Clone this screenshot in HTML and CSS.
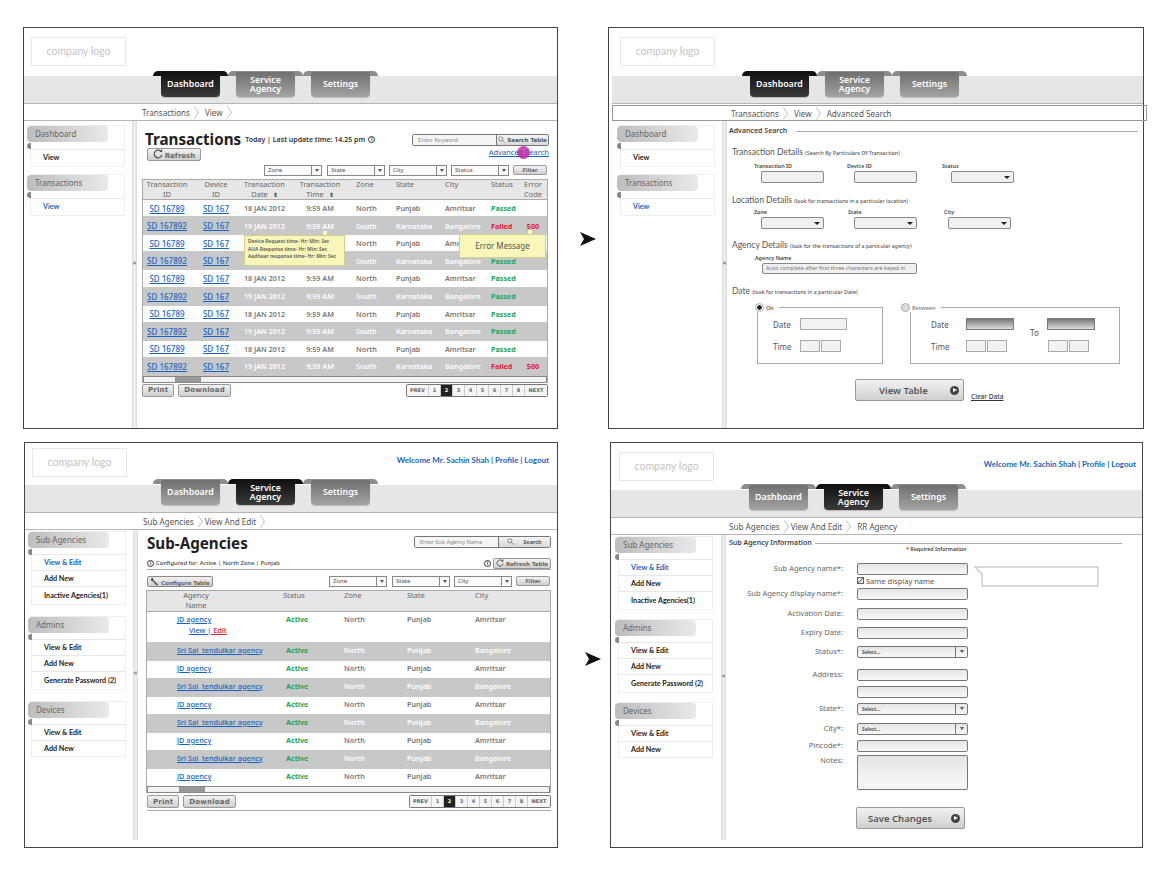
FILE: index.html
```html
<!DOCTYPE html>
<html lang="en">
<head>
    <meta charset="UTF-8">
    <title>Wireframes</title>
    <link rel="stylesheet" href="styles.css">
</head>
<body>
<div class="board">

    <!-- frame 1: transactions -->
    <section class="frame f1">
        <div class="top"><div class="logo">company logo</div></div>
        <nav class="tabs">
            <a class="tab on">Dashboard</a>
            <a class="tab">Service<br>Agency</a>
            <a class="tab">Settings</a>
        </nav>
        <div class="crumbs"><span>Transactions</span><i></i><span>View</span><i></i></div>
        <div class="split">
            <aside class="side">
                <div class="group"><h4>Dashboard</h4><a class="first">View</a></div>
                <div class="group"><h4>Transactions</h4><a class="first cur">View</a></div>
            </aside>
            <div class="bar">«</div>
            <main class="content">
                <div class="head-row">
                    <div>
                        <div class="title-line"><h1>Transactions</h1><span class="today">Today | Last update time: 14.25 pm</span><span class="info">i</span></div>
                        <button class="btn refresh"><svg viewBox="0 0 12 12" width="10" height="10"><path d="M10 3.5A4.6 4.6 0 1 0 10.6 7" fill="none" stroke="#555" stroke-width="1.5"/><path d="M7.5 3.6h3.6V0z" fill="#555"/></svg>Refresh</button>
                    </div>
                    <div class="head-right">
                        <div class="search"><span class="kw">Enter Keyword</span><span class="go"><svg viewBox="0 0 10 10" width="7" height="7"><circle cx="4" cy="4" r="3" fill="none" stroke="#666"/><path d="M6 6l3.5 3.5" stroke="#666"/></svg>Search Table</span></div>
                        <a class="adv">Advanced Search</a>
                    </div>
                </div>
                <div class="filters">
                    <div class="sel">Zone<b></b></div>
                    <div class="sel">State<b></b></div>
                    <div class="sel">City<b></b></div>
                    <div class="sel">Status<b></b></div>
                    <button class="btn filter">Filter</button>
                </div>
                <div class="table tx">
                    <div class="row th"><span>Transaction<br>ID</span><span>Device<br>ID</span><span>Transaction<br>Date <em>⬍</em></span><span>Transaction<br>Time <em>⬍</em></span><span>Zone</span><span>State</span><span>City</span><span>Status</span><span>Error<br>Code</span></div>
                    <div class="row"><a>SD 16789</a><a>SD 167</a><span>18 JAN 2012</span><span>9:59 AM</span><span>North</span><span>Punjab</span><span>Amritsar</span><span class="ok">Passed</span><span></span></div>
                    <div class="row alt"><a>SD 167892</a><a>SD 167</a><span>19 JAN 2012</span><span>9:59 AM</span><span>South</span><span>Karnataka</span><span>Bangalore</span><span class="bad">Failed</span><span class="bad">500</span></div>
                    <div class="row"><a>SD 16789</a><a>SD 167</a><span>18 JAN 2012</span><span>9:59 AM</span><span>North</span><span>Punjab</span><span>Amritsar</span><span class="ok">Passed</span><span></span></div>
                    <div class="row alt"><a>SD 167892</a><a>SD 167</a><span>19 JAN 2012</span><span>9:59 AM</span><span>South</span><span>Karnataka</span><span>Bangalore</span><span class="ok">Passed</span><span></span></div>
                    <div class="row"><a>SD 16789</a><a>SD 167</a><span>18 JAN 2012</span><span>9:59 AM</span><span>North</span><span>Punjab</span><span>Amritsar</span><span class="ok">Passed</span><span></span></div>
                    <div class="row alt"><a>SD 167892</a><a>SD 167</a><span>19 JAN 2012</span><span>9:59 AM</span><span>South</span><span>Karnataka</span><span>Bangalore</span><span class="ok">Passed</span><span></span></div>
                    <div class="row"><a>SD 16789</a><a>SD 167</a><span>18 JAN 2012</span><span>9:59 AM</span><span>North</span><span>Punjab</span><span>Amritsar</span><span class="ok">Passed</span><span></span></div>
                    <div class="row alt"><a>SD 167892</a><a>SD 167</a><span>19 JAN 2012</span><span>9:59 AM</span><span>South</span><span>Karnataka</span><span>Bangalore</span><span class="ok">Passed</span><span></span></div>
                    <div class="row"><a>SD 16789</a><a>SD 167</a><span>18 JAN 2012</span><span>9:59 AM</span><span>North</span><span>Punjab</span><span>Amritsar</span><span class="ok">Passed</span><span></span></div>
                    <div class="row alt"><a>SD 167892</a><a>SD 167</a><span>19 JAN 2012</span><span>9:59 AM</span><span>South</span><span>Karnataka</span><span>Bangalore</span><span class="bad">Failed</span><span class="bad">500</span></div>
                    <div class="hscroll"><u></u></div>
                    <div class="tip tip-time">Device Request time- Hr: Min: Sec<br>AUA Response time- Hr: Min: Sec<br>Aadhaar response time- Hr: Min: Sec</div>
                    <div class="tip tip-err">Error Message</div>
                </div>
                <div class="foot">
                    <button class="btn big">Print</button>
                    <button class="btn big">Download</button>
                    <div class="pages"><a class="w">PREV</a><a>1</a><a class="cur">2</a><a>3</a><a>4</a><a>5</a><a>6</a><a>7</a><a>8</a><a class="w">NEXT</a></div>
                </div>
            </main>
        </div>
        <div class="dot"></div>
    </section>

    <div class="arrow a1"></div>

    <!-- frame 2: advanced search -->
    <section class="frame f2">
        <div class="top"><div class="logo">company logo</div></div>
        <nav class="tabs">
            <a class="tab on">Dashboard</a>
            <a class="tab">Service<br>Agency</a>
            <a class="tab">Settings</a>
        </nav>
        <div class="crumbs boxed"><span>Transactions</span><i></i><span>View</span><i></i><span>Advanced Search</span></div>
        <div class="split">
            <aside class="side">
                <div class="group"><h4>Dashboard</h4><a class="first">View</a></div>
                <div class="group"><h4>Transactions</h4><a class="first cur">View</a></div>
            </aside>
            <div class="bar">«</div>
            <main class="content">
                <div class="legend"><span>Advanced Search</span><hr></div>

                <h5 class="sec">Transaction Details <small>(Search By Particulars Of Transaction)</small></h5>
                <div class="fields">
                    <label>Transaction ID<span class="in"></span></label>
                    <label>Device ID<span class="in"></span></label>
                    <label class="third">Status<span class="in dd"></span></label>
                </div>

                <h5 class="sec">Location Details <small>(look for transactions in a particular location)</small></h5>
                <div class="fields tight">
                    <label>Zone<span class="in dd"></span></label>
                    <label>State<span class="in dd"></span></label>
                    <label class="third">City<span class="in dd"></span></label>
                </div>

                <h5 class="sec">Agency Details <small>(look for the transactions of a particular agency)</small></h5>
                <div class="agency"><label>Agency Name<span class="in auto">Auto complete after first three characters are keyed in</span></label></div>

                <h5 class="sec">Date <small>(look for transactions in a particular Date)</small></h5>
                <div class="dates">
                    <div class="dbox on-box">
                        <span class="dlabel"><span class="radio sel-r"></span>On</span>
                        <div class="dline"><span class="dt">Date</span><span class="dinp wide"></span></div>
                        <div class="dline"><span class="dt">Time</span><span class="dinp"></span><span class="dinp"></span></div>
                    </div>
                    <div class="dbox between">
                        <span class="dlabel"><span class="radio"></span>Between</span>
                        <div class="dline"><span class="dt">Date</span><span class="dinp wide dark"></span><span class="dto">To</span><span class="dinp wide dark"></span></div>
                        <div class="dline"><span class="dt">Time</span><span class="dinp"></span><span class="dinp"></span><span class="dgap"></span><span class="dinp"></span><span class="dinp"></span></div>
                    </div>
                </div>
                <div class="actions"><button class="btn action">View Table<b class="play"></b></button><a class="clear">Clear Data</a></div>
            </main>
        </div>
    </section>

    <!-- frame 3: sub agencies -->
    <section class="frame f3">
        <div class="top"><div class="logo">company logo</div><div class="welcome">Welcome Mr. Sachin Shah | Profile | Logout</div></div>
        <nav class="tabs">
            <a class="tab">Dashboard</a>
            <a class="tab on">Service<br>Agency</a>
            <a class="tab">Settings</a>
        </nav>
        <div class="crumbs"><span>Sub Agencies</span><i></i><span>View And Edit</span><i></i></div>
        <div class="split">
            <aside class="side">
                <div class="group"><h4>Sub Agencies</h4><a class="first cur">View &amp; Edit</a><a>Add New</a><a class="tall">Inactive Agencies(1)</a></div>
                <div class="group"><h4>Admins</h4><a class="first">View &amp; Edit</a><a>Add New</a><a class="tall">Generate Password (2)</a></div>
                <div class="group"><h4>Devices</h4><a class="first">View &amp; Edit</a><a>Add New</a></div>
            </aside>
            <div class="bar">«</div>
            <main class="content">
                <div class="agency-head">
                    <h1>Sub-Agencies</h1>
                    <div class="search sa"><span class="kw">Enter Sub Agency Name</span><span class="go"><svg viewBox="0 0 10 10" width="7" height="7"><circle cx="4" cy="4" r="3" fill="none" stroke="#666"/><path d="M6 6l3.5 3.5" stroke="#666"/></svg>Search</span></div>
                </div>
                <div class="config">
                    <span class="info">i</span><span class="cfg-text">Configured for: Active | North Zone | Punjab</span>
                    <span class="info push">i</span>
                    <button class="btn tbl-refresh"><svg viewBox="0 0 12 12" width="8" height="8"><path d="M10 3.5A4.6 4.6 0 1 0 10.6 7" fill="none" stroke="#555" stroke-width="1.5"/><path d="M7.5 3.6h3.6V0z" fill="#555"/></svg>Refresh Table</button>
                </div>
                <div class="filters agency-f">
                    <button class="btn configure"><svg viewBox="0 0 12 12" width="9" height="9"><path d="M1 2.5L3 .8l1.8 2-.4 1.2 6.4 6-1.4 1.5-6.3-6.2-1.2.3z" fill="#555"/></svg>Configure Table</button>
                    <div class="sel">Zone<b></b></div>
                    <div class="sel">State<b></b></div>
                    <div class="sel">City<b></b></div>
                    <button class="btn filter">Filter</button>
                </div>
                <div class="table ag">
                    <div class="row th"><span class="ctr">Agency<br>Name</span><span>Status</span><span>Zone</span><span>State</span><span>City</span></div>
                    <div class="row open"><div class="nm"><a>JD agency</a><div class="acts"><a>View | </a><a class="edit">Edit</a></div></div><span class="ok">Active</span><span>North</span><span>Punjab</span><span>Amritsar</span></div>
                    <div class="row alt"><a>Sri Sai  tendulkar agency</a><span class="ok">Active</span><span>North</span><span>Punjab</span><span>Bangalore</span></div>
                    <div class="row"><a>JD agency</a><span class="ok">Active</span><span>North</span><span>Punjab</span><span>Amritsar</span></div>
                    <div class="row alt"><a>Sri Sai  tendulkar agency</a><span class="ok">Active</span><span>North</span><span>Punjab</span><span>Bangalore</span></div>
                    <div class="row"><a>JD agency</a><span class="ok">Active</span><span>North</span><span>Punjab</span><span>Amritsar</span></div>
                    <div class="row alt"><a>Sri Sai  tendulkar agency</a><span class="ok">Active</span><span>North</span><span>Punjab</span><span>Bangalore</span></div>
                    <div class="row"><a>JD agency</a><span class="ok">Active</span><span>North</span><span>Punjab</span><span>Amritsar</span></div>
                    <div class="row alt"><a>Sri Sai  tendulkar agency</a><span class="ok">Active</span><span>North</span><span>Punjab</span><span>Bangalore</span></div>
                    <div class="row"><a>JD agency</a><span class="ok">Active</span><span>North</span><span>Punjab</span><span>Amritsar</span></div>
                    <div class="hscroll"><u></u></div>
                </div>
                <div class="foot lined">
                    <button class="btn big">Print</button>
                    <button class="btn big">Download</button>
                    <div class="pages"><a class="w">PREV</a><a>1</a><a class="cur">2</a><a>3</a><a>4</a><a>5</a><a>6</a><a>7</a><a>8</a><a class="w">NEXT</a></div>
                </div>
            </main>
        </div>
    </section>

    <div class="arrow a2"></div>

    <!-- frame 4: edit sub agency -->
    <section class="frame f4">
        <div class="top"><div class="logo">company logo</div><div class="welcome">Welcome Mr. Sachin Shah | Profile | Logout</div></div>
        <nav class="tabs">
            <a class="tab">Dashboard</a>
            <a class="tab on">Service<br>Agency</a>
            <a class="tab">Settings</a>
        </nav>
        <div class="crumbs"><span>Sub Agencies</span><i></i><span>View And Edit</span><i></i><span>RR Agency</span></div>
        <div class="split">
            <aside class="side">
                <div class="group"><h4>Sub Agencies</h4><a class="first cur">View &amp; Edit</a><a>Add New</a><a class="tall">Inactive Agencies(1)</a></div>
                <div class="group"><h4>Admins</h4><a class="first">View &amp; Edit</a><a>Add New</a><a class="tall">Generate Password (2)</a></div>
                <div class="group"><h4>Devices</h4><a class="first">View &amp; Edit</a><a>Add New</a></div>
            </aside>
            <div class="bar">«</div>
            <main class="content">
                <div class="legend info-l"><span>Sub Agency Information</span><hr></div>
                <div class="req">* Required Information</div>
                <form class="form">
                    <div class="line l1"><label>Sub Agency name*:</label><span class="fi"></span>
                        <svg class="callout" viewBox="0 0 125 21" width="125" height="21"><path d="M1 1H124V20H8V8Z" fill="white" stroke="#ccc" stroke-width="1.5"/></svg>
                    </div>
                    <div class="same"><span class="chk"></span>Same display name</div>
                    <div class="line l2"><label>Sub Agency display name*:</label><span class="fi"></span></div>
                    <div class="line l3"><label>Activation Date:</label><span class="fi"></span></div>
                    <div class="line l4"><label>Expiry Date:</label><span class="fi"></span></div>
                    <div class="line l5"><label>Status*:</label><span class="fi pick">Select...<b></b></span></div>
                    <div class="line l6"><label>Address:</label><span class="fi"></span></div>
                    <div class="line l7"><label></label><span class="fi"></span></div>
                    <div class="line l8"><label>State*:</label><span class="fi pick">Select...<b></b></span></div>
                    <div class="line l9"><label>City*:</label><span class="fi pick">Select...<b></b></span></div>
                    <div class="line l10"><label>Pincode*:</label><span class="fi"></span></div>
                    <div class="line l11"><label>Notes:</label><span class="fi notes"></span></div>
                    <div class="line l12"><label></label><button type="button" class="btn action save">Save Changes<b class="play"></b></button></div>
                </form>
            </main>
        </div>
    </section>
</div>
</body>
</html>
```

FILE: styles.css
```css
* {
    box-sizing: border-box;
}

body {
    margin: 0;
    background-color: white;
    font-family: "Noto Sans", "Open Sans", sans-serif;
    color: #666;
}

.board {
    position: relative;
    display: grid;
    grid-template-columns: 535px 536px;
    grid-template-rows: 402px 406px;
    column-gap: 50px;
    row-gap: 13px;
    padding: 27px 0 0 23px;
}

.frame {
    position: relative;
    z-index: 0;
    display: flex;
    flex-direction: column;
    background-color: white;
    border: 1px solid #444;
}

.f3 {
    margin-left: 1px;
}

.f4 {
    margin-left: 2px;
    margin-right: 1px;
}

/* top strip */
.top {
    height: 48px;
    padding: 9px 8px 0 7px;
    display: flex;
    justify-content: space-between;
    flex-shrink: 0;
}

.f2 .top {
    padding-left: 11px;
}

.f3 .top {
    height: 42px;
    padding-top: 5px;
}

.f4 .top {
    height: 47px;
    padding: 9px 6px 0 8px;
}

.logo {
    width: 95px;
    height: 29px;
    border: 1px solid #e8e8e8;
    color: #c4c4c4;
    font-family: Lato, sans-serif;
    font-size: 10.5px;
    line-height: 27px;
    text-align: center;
}

.welcome {
    color: #1565c0;
    font-family: Lato, sans-serif;
    font-size: 8px;
    font-weight: 700;
    margin-top: 7px;
}

/* tabs */
.tabs {
    position: relative;
    z-index: 0;
    height: 28px;
    flex-shrink: 0;
    display: flex;
    gap: 16px;
    padding-left: 137px;
    background-color: #e6e6e6;
    border-bottom: 1px solid #b5b5b5;
}

.f2 .tabs {
    margin-left: 3px;
    padding-left: 138px;
}

.f3 .tabs {
    padding-left: 136px;
}

.f4 .tabs {
    padding-left: 138px;
}

.tab {
    position: relative;
    width: 59px;
    height: 25px;
    margin-top: -4px;
    display: flex;
    align-items: center;
    justify-content: center;
    text-align: center;
    font-size: 8.8px;
    font-weight: 600;
    line-height: 9px;
    color: white;
    border-radius: 2px 2px 4px 4px;
    background: linear-gradient(#6f6f6f, #a3a3a3);
    box-shadow: 0 1px 1px #bbb;
}

.f3 .tab, .f4 .tab {
    margin-top: -5px;
}

.tab::before {
    content: "";
    position: absolute;
    top: -1px;
    left: -8px;
    right: -8px;
    height: 5px;
    z-index: -1;
    border-radius: 5px 5px 0 0;
    background-color: #8c8c8c;
}

.tab.on {
    background: linear-gradient(#111, #3a3a3a);
}

.tab.on::before {
    background-color: #111;
}

/* breadcrumb */
.crumbs {
    height: 17px;
    flex-shrink: 0;
    display: flex;
    align-items: center;
    padding-left: 118px;
    border-bottom: 1px solid #b5b5b5;
    font-size: 8.1px;
    color: #555;
}

.crumbs i {
    width: 9px;
    height: 9px;
    margin: 0 6px 0 0;
    border-top: 1px solid #bbb;
    border-right: 1px solid #bbb;
    transform: scaleX(.7) rotate(45deg);
}

.f3 .crumbs i, .f4 .crumbs i:first-of-type {
    margin-right: 2px;
}

.crumbs.boxed {
    margin: 1px -4px 0 3px;
    height: 16px;
    padding-left: 118px;
    border: 1px solid #999;
}

.f3 .crumbs, .f4 .crumbs {
    padding-left: 118px;
}

/* sidebar + content */
.split {
    flex: 1;
    display: flex;
    min-height: 0;
}

.side {
    width: 106px;
    flex-shrink: 0;
    padding: 4px 0 0 6px;
}

.f2 .side {
    width: 111px;
    padding-left: 11px;
}

.f3 .side {
    padding-top: 1px;
}

.f4 .side {
    width: 108px;
    padding: 1px 0 0 7px;
}

.group {
    position: relative;
    width: 95px;
    margin-bottom: 7px;
    border: 1px solid #eee;
    display: flex;
    flex-direction: column;
}

.f3 .group {
    margin-bottom: 11px;
}

.f4 .group {
    margin-bottom: 9px;
}

.group h4 {
    position: relative;
    margin: 0 0 7px -4px;
    width: 81px;
    height: 16px;
    padding-left: 8px;
    font-size: 8px;
    font-weight: 400;
    line-height: 15px;
    color: #666;
    border-radius: 4px;
    background: linear-gradient(90deg, #bdbdbd, #e9e9e9);
}

.f3 .group h4, .f4 .group h4 {
    margin-bottom: 6px;
}

.group h4::after {
    content: "";
    position: absolute;
    left: 0;
    bottom: -7px;
    width: 4px;
    height: 6px;
    border-radius: 3px 0 0 3px;
    background-color: #888;
}

.group a {
    height: 16px;
    padding-left: 12px;
    border-top: 1px solid #e8e8e8;
    font-family: Lato, sans-serif;
    font-size: 7.2px;
    font-weight: 700;
    line-height: 15px;
    color: #222;
}

.group a.first {
    height: 17px;
}

.f3 .group a.first, .f4 .group a.first {
    height: 16px;
}

.group a.tall {
    height: 18px;
    line-height: 18px;
}

.group a.cur {
    color: #1565c0;
}

.bar {
    width: 5px;
    flex-shrink: 0;
    margin-left: 2px;
    background-color: #ececec;
    border-left: 1px solid #ddd;
    border-right: 1px solid #ddd;
    display: flex;
    align-items: center;
    justify-content: center;
    font-size: 7px;
    color: #555;
    padding-bottom: 25px;
}

.f3 .bar, .f4 .bar {
    margin-bottom: 7px;
}

.content {
    flex: 1;
    min-width: 0;
    padding: 0 9px 0 5px;
}

.f2 .content {
    padding: 0 5px 0 2px;
}

.f3 .content {
    padding-right: 6px;
}

.f4 .content {
    padding-left: 3px;
}

h1 {
    margin: 0;
    color: #222;
    font-size: 15.2px;
    font-weight: 700;
    line-height: 20px;
}

button {
    font-family: "DejaVu Sans", sans-serif;
}

.btn {
    border: 1px solid #999;
    border-radius: 2px;
    padding: 0;
    color: #666;
    font-weight: 700;
    background: linear-gradient(#f2f2f2, #cfcfcf);
}

.btn svg {
    vertical-align: -1px;
    margin-right: 2px;
}

.head-row {
    height: 40px;
    padding-top: 9px;
    display: flex;
    justify-content: space-between;
}

.title-line {
    display: flex;
    align-items: center;
    gap: 3px;
    height: 18px;
    margin-left: 3px;
}

.today {
    margin-left: 1px;
    color: #333;
    font-size: 7px;
    font-weight: 600;
}

.info {
    width: 7px;
    height: 7px;
    flex-shrink: 0;
    display: inline-block;
    border: 1px solid #333;
    border-radius: 50%;
    color: #333;
    font-size: 5px;
    font-weight: 700;
    line-height: 5px;
    text-align: center;
}

.refresh {
    display: block;
    margin: 0 0 0 5px;
    width: 54px;
    height: 13px;
    font-size: 7px;
    line-height: 10px;
}

.head-right {
    width: 138px;
    margin-right: -1px;
    display: flex;
    flex-direction: column;
    align-items: flex-end;
}

.search {
    width: 137px;
    height: 12px;
    margin-top: 4px;
    display: flex;
    border: 1px solid #777;
    border-radius: 2px;
    font-family: "DejaVu Sans", sans-serif;
    font-size: 5.5px;
    line-height: 10px;
}

.kw {
    flex: 1;
    padding-left: 5px;
    color: #888;
    background-color: #f5f5f5;
}

.go {
    width: 52px;
    text-align: center;
    border-left: 1px solid #777;
    color: #555;
    font-weight: 700;
    background: linear-gradient(#f5f5f5, #d8d8d8);
}

.go svg {
    margin-right: 2px;
    vertical-align: -1px;
}

.adv {
    margin-top: 1px;
    color: #1565c0;
    font-size: 7.5px;
    text-decoration: underline;
}

.dot {
    position: absolute;
    left: 493px;
    top: 118px;
    width: 13px;
    height: 13px;
    border-radius: 50%;
    background-color: rgba(190, 30, 160, .8);
}

.filters {
    height: 10px;
    margin-top: 4px;
    display: flex;
    justify-content: flex-end;
    gap: 4px;
    padding-right: 1px;
}

.filters .sel:first-of-type {
    margin-right: 1px;
}

.sel {
    position: relative;
    width: 58px;
    height: 11px;
    padding-left: 3px;
    border: 1px solid #888;
    background-color: #fafafa;
    font-size: 6px;
    line-height: 9px;
    color: #555;
}

.sel b {
    position: absolute;
    top: 0;
    right: 0;
    width: 10px;
    height: 9px;
    border-left: 1px solid #888;
}

.sel b::after, .fi.pick b::after {
    content: "";
    position: absolute;
    top: 3px;
    left: 3px;
    border-left: 2px solid transparent;
    border-right: 2px solid transparent;
    border-top: 3px solid #555;
}

.filter {
    width: 34px;
    height: 10px;
    font-size: 5px;
    line-height: 8px;
}

/* tables */
.table {
    position: relative;
    margin-top: 4px;
    border: 1px solid #aaa;
    border-bottom: 0;
}

.row {
    display: grid;
    align-items: center;
    font-size: 7.2px;
    font-weight: 600;
    color: #777;
}

.tx .row {
    grid-template-columns: 48px 50px 47px 64px 40px 49px 46px 32px 1fr;
    height: 16.2px;
    text-align: center;
}

.tx .row.alt {
    height: 19px;
}

.tx .row span:nth-child(n+5):nth-child(-n+8) {
    padding-left: 4px;
    text-align: left;
}

.row a {
    color: #1565c0;
    text-decoration: underline;
    font-size: 8px;
    font-weight: 500;
}

.row.alt {
    background-color: #c8c8c8;
    color: white;
}

.tx .row.th, .row.th {
    height: 20px;
    align-items: start;
    background-color: #e6e6e6;
    border-bottom: 1px solid #aaa;
    font-size: 7.5px;
    font-weight: 400;
    line-height: 9.5px;
    color: #666;
}

.row em {
    margin-left: 3px;
    font-style: normal;
    font-size: 6px;
    color: #444;
}

.row .ok {
    color: #22a55a;
    font-weight: 700;
}

.row .bad {
    color: #e01e2c;
    font-weight: 700;
}

.hscroll {
    height: 7px;
    background-color: #f2f2f2;
    border: 1px solid #888;
}

.hscroll u {
    display: block;
    width: 26px;
    height: 5px;
    margin-left: 31px;
    background-color: #999;
}

.tip {
    position: absolute;
    background-color: #f8f7b9;
    border: 1px solid #cfcf90;
    color: #555;
}

.tip-time {
    left: 101px;
    top: 55px;
    width: 101px;
    height: 31px;
    padding: 2px 0 0 3px;
    font-size: 5px;
    font-weight: 600;
    line-height: 7.5px;
}

.tip-err {
    left: 316px;
    top: 54px;
    width: 87px;
    height: 24px;
    font-size: 8px;
    line-height: 21px;
    text-align: center;
}

.tip-time::before, .tip-err::before {
    content: "";
    position: absolute;
    top: -5px;
    width: 4px;
    height: 4px;
    background-color: #f8f7b9;
    border-right: 1px solid #cfcf90;
}

.tip-time::before {
    left: 78px;
}

.tip-err::before {
    left: 68px;
}

.foot {
    display: flex;
    align-items: flex-start;
    gap: 4px;
    margin-top: 1px;
}

.big {
    height: 13px;
    min-width: 32px;
    padding: 0 5px;
    font-size: 7px;
    line-height: 10px;
    letter-spacing: .2px;
}

.pages {
    margin-left: auto;
    height: 13px;
    display: flex;
    border: 1px solid #777;
    border-radius: 2px;
    font-family: "DejaVu Sans", sans-serif;
    font-size: 5px;
    line-height: 11px;
    font-weight: 700;
    color: #666;
}

.pages a {
    width: 12px;
    text-align: center;
    border-right: 1px solid #ccc;
    background-color: #f5f5f5;
}

.pages a.w {
    width: 22px;
}

.pages a.cur {
    background-color: #222;
    color: white;
}

.pages a:last-child {
    border-right: 0;
}

/* advanced search */
.legend {
    display: flex;
    align-items: center;
    gap: 9px;
    height: 11px;
    margin-top: 4px;
    font-size: 7px;
    font-weight: 600;
    color: #444;
}

.legend hr {
    flex: 1;
    margin: 2px 0 0 0;
    border: 0;
    border-top: 1px solid #aaa;
}

.sec {
    margin: 10px 0 0 3px;
    font-family: Lato, sans-serif;
    font-size: 8.5px;
    font-weight: 400;
    line-height: 12px;
    color: #555;
}

.sec small {
    font-family: "Noto Sans", sans-serif;
    font-size: 5.3px;
    font-weight: 500;
}

.fields {
    display: flex;
    margin: 3px 0 0 25px;
    height: 22px;
}

.fields label {
    position: relative;
    width: 93px;
    font-size: 5.4px;
    font-weight: 600;
    color: #444;
    line-height: 8px;
}

.fields label.third {
    margin-left: 2px;
}

.in {
    position: relative;
    display: block;
    width: 63px;
    height: 12px;
    margin: 1px 0 0 7px;
    border: 1px solid #888;
    border-radius: 2px;
    background-color: #f0f0f0;
}

.third .in {
    margin-left: 9px;
}

.in.dd::after {
    content: "";
    position: absolute;
    top: 4px;
    right: 3px;
    border-left: 3px solid transparent;
    border-right: 3px solid transparent;
    border-top: 3px solid #222;
}

.fields.tight {
    margin-top: 1px;
    height: 21px;
}

.tight label:nth-child(1) {
    width: 94px;
}

.tight label:nth-child(2) {
    width: 96px;
}

.tight label:nth-child(2) .in {
    margin-left: 6px;
}

.fields.tight label.third {
    margin-left: 0;
}

.tight .third .in {
    margin-left: 4px;
}

.agency {
    margin: 2px 0 0 26px;
    height: 21px;
}

.agency label {
    display: block;
    font-size: 5.4px;
    font-weight: 600;
    line-height: 8px;
    color: #444;
}

.in.auto {
    width: 155px;
    height: 11px;
    margin-top: 1px;
    padding-left: 3px;
    font-size: 5.5px;
    font-weight: 400;
    line-height: 9px;
    color: #777;
}

.dates {
    display: flex;
    gap: 27px;
    margin: 9px 0 0 28px;
}

.dbox {
    position: relative;
    height: 57px;
    border: 1px solid #aaa;
    padding-top: 10px;
}

.on-box {
    width: 126px;
}

.between {
    width: 210px;
}

.dlabel {
    position: absolute;
    top: -5px;
    display: flex;
    align-items: center;
    gap: 2px;
    padding-right: 5px;
    background-color: white;
    font-size: 5.5px;
    font-weight: 600;
    color: #555;
}

.on-box .dlabel {
    left: -3px;
}

.between .dlabel {
    left: -10px;
    color: #888;
}

.radio {
    width: 9px;
    height: 9px;
    border-radius: 50%;
    border: 1px solid #aaa;
    background-color: #ddd;
}

.radio.sel-r {
    background: radial-gradient(circle, #222 0 2px, white 2.5px);
}

.dline {
    display: flex;
    align-items: center;
    gap: 1px;
    height: 12px;
    margin: 0 0 10px 15px;
    font-size: 8px;
    color: #555;
}

.between .dline {
    margin-left: 20px;
}

.dt {
    width: 26px;
}

.between .dt {
    width: 34px;
}

.dinp {
    width: 20px;
    height: 12px;
    border: 1px solid #aaa;
    background-color: #f2f2f2;
}

.dinp.wide {
    width: 47px;
}

.dinp.dark {
    width: 48px;
    border-color: #777;
    background: linear-gradient(#777, #ddd);
}

.dto {
    width: 31px;
    padding: 9px 0 0 15px;
    height: 12px;
    line-height: 12px;
}

.dgap {
    width: 39px;
}

.actions {
    display: flex;
    align-items: flex-end;
    gap: 7px;
    margin: 15px 0 0 126px;
}

.action {
    position: relative;
    width: 109px;
    height: 22px;
    font-family: "Noto Sans", sans-serif;
    font-size: 9.5px;
    font-weight: 600;
    text-align: left;
    padding-left: 23px;
    border-color: #999;
    color: #555;
}

.play {
    position: absolute;
    top: 6px;
    right: 4px;
    width: 9px;
    height: 9px;
    border-radius: 50%;
    background-color: #444;
}

.play::after {
    content: "";
    position: absolute;
    top: 2px;
    left: 3px;
    border-top: 2.5px solid transparent;
    border-bottom: 2.5px solid transparent;
    border-left: 4px solid white;
}

.clear {
    font-size: 6.5px;
    font-weight: 500;
    color: #333;
    text-decoration: underline;
}

/* sub agencies */
.agency-head {
    height: 27px;
    padding: 3px 0 0 4px;
    display: flex;
    justify-content: space-between;
    align-items: flex-start;
}

.search.sa {
    width: 137px;
    margin-top: 3px;
    font-family: "Noto Sans", sans-serif;
}

.sa .go {
    width: 52px;
}

.sa .go svg {
    margin-right: 9px;
}

.config {
    display: flex;
    align-items: center;
    height: 12px;
    margin: 0 0 0 4px;
    font-size: 5.8px;
    font-weight: 500;
    color: #444;
    gap: 2px;
    border-bottom: 1px solid #aaa;
    box-sizing: content-box;
}

.info.push {
    margin-left: auto;
}

.tbl-refresh {
    width: 58px;
    height: 11px;
    font-size: 5.5px;
    line-height: 8px;
}

.agency-f {
    margin-top: 6px;
}

.configure {
    width: 66px;
    height: 11px;
    margin: 0 auto 0 4px;
    font-size: 5.5px;
    line-height: 8px;
    border-color: #888;
}

.ag {
    margin-top: 4px;
    margin-left: 3px;
}

.ag .row {
    grid-template-columns: 136px 61px 63px 68px 1fr;
    height: 17px;
    padding-bottom: 4px;
}

.ag .row a {
    margin-left: 30px;
    font-size: 7.3px;
    white-space: pre;
}

.ag .row.th {
    height: 21px;
    padding-bottom: 0;
}

.ag .row.alt {
    height: 19px;
}

.ag .ctr {
    padding-right: 38px;
    text-align: center;
}

.ag .row .ok {
    padding-left: 3px;
}

.ag .row.open {
    height: 30px;
    align-items: start;
    padding: 2px 0 0;
}

.acts {
    margin-top: 2px;
    line-height: 9px;
}

.ag .row .acts a {
    margin-left: 42px;
}

.ag .row .acts a.edit {
    margin-left: 0;
    color: #e01e2c;
}

.foot.lined {
    height: 16px;
    margin: 2px 0 0 4px;
    border-bottom: 1px solid #aaa;
}

/* edit form */
.info-l {
    margin-top: 2px;
}

.info-l hr {
    margin-right: 11px;
    margin-left: -6px;
}

.req {
    margin: -3px 0 0 177px;
    font-size: 5.3px;
    font-weight: 600;
    line-height: 8px;
    color: #444;
}

.form {
    margin-top: 10px;
}

.line {
    position: relative;
    display: flex;
    align-items: flex-start;
    gap: 14px;
    font-size: 7.5px;
    color: #666;
}

.line label {
    width: 114px;
    flex-shrink: 0;
    text-align: right;
    line-height: 11px;
}

.fi {
    position: relative;
    display: block;
    width: 111px;
    height: 12px;
    border: 1px solid #777;
    border-radius: 2px;
    background: linear-gradient(#e4e4e4, #f8f8f8);
}

.fi.pick {
    padding-left: 4px;
    font-size: 4.8px;
    font-weight: 700;
    line-height: 10px;
    color: #555;
}

.fi.pick b {
    position: absolute;
    top: 0;
    right: 0;
    width: 12px;
    height: 10px;
    border-left: 1px solid #777;
}

.fi.pick b::after {
    left: 4px;
}

.fi.notes {
    height: 35px;
}

.callout {
    position: absolute;
    left: 245px;
    top: 3px;
}

.same {
    margin: 0 0 0 128px;
    height: 11px;
    display: flex;
    align-items: center;
    gap: 2px;
    font-size: 7.5px;
    color: #555;
}

.chk {
    width: 7px;
    height: 7px;
    border: 1px solid #666;
    background: linear-gradient(135deg, #eee 45%, #555 50%, #eee 55%);
}

.l2 { margin-top: 2px; }
.l3 { margin-top: 8px; }
.l4 { margin-top: 7px; }
.l5 { margin-top: 7px; }
.l6 { margin-top: 11px; }
.l7 { margin-top: 5px; }
.l8 { margin-top: 5px; }
.l9 { margin-top: 8px; }
.l10 { margin-top: 5px; }
.l11 { margin-top: 3px; }
.l12 { margin-top: 17px; }

.save {
    margin-left: -1px;
    padding-left: 11px;
}

/* arrows between frames */
.arrow {
    position: absolute;
    width: 16px;
    height: 14px;
    background-color: #111;
    clip-path: polygon(0 0, 100% 50%, 0 100%, 25% 50%);
}

.a1 {
    left: 580px;
    top: 232px;
}

.a2 {
    left: 585px;
    top: 652px;
}
```
